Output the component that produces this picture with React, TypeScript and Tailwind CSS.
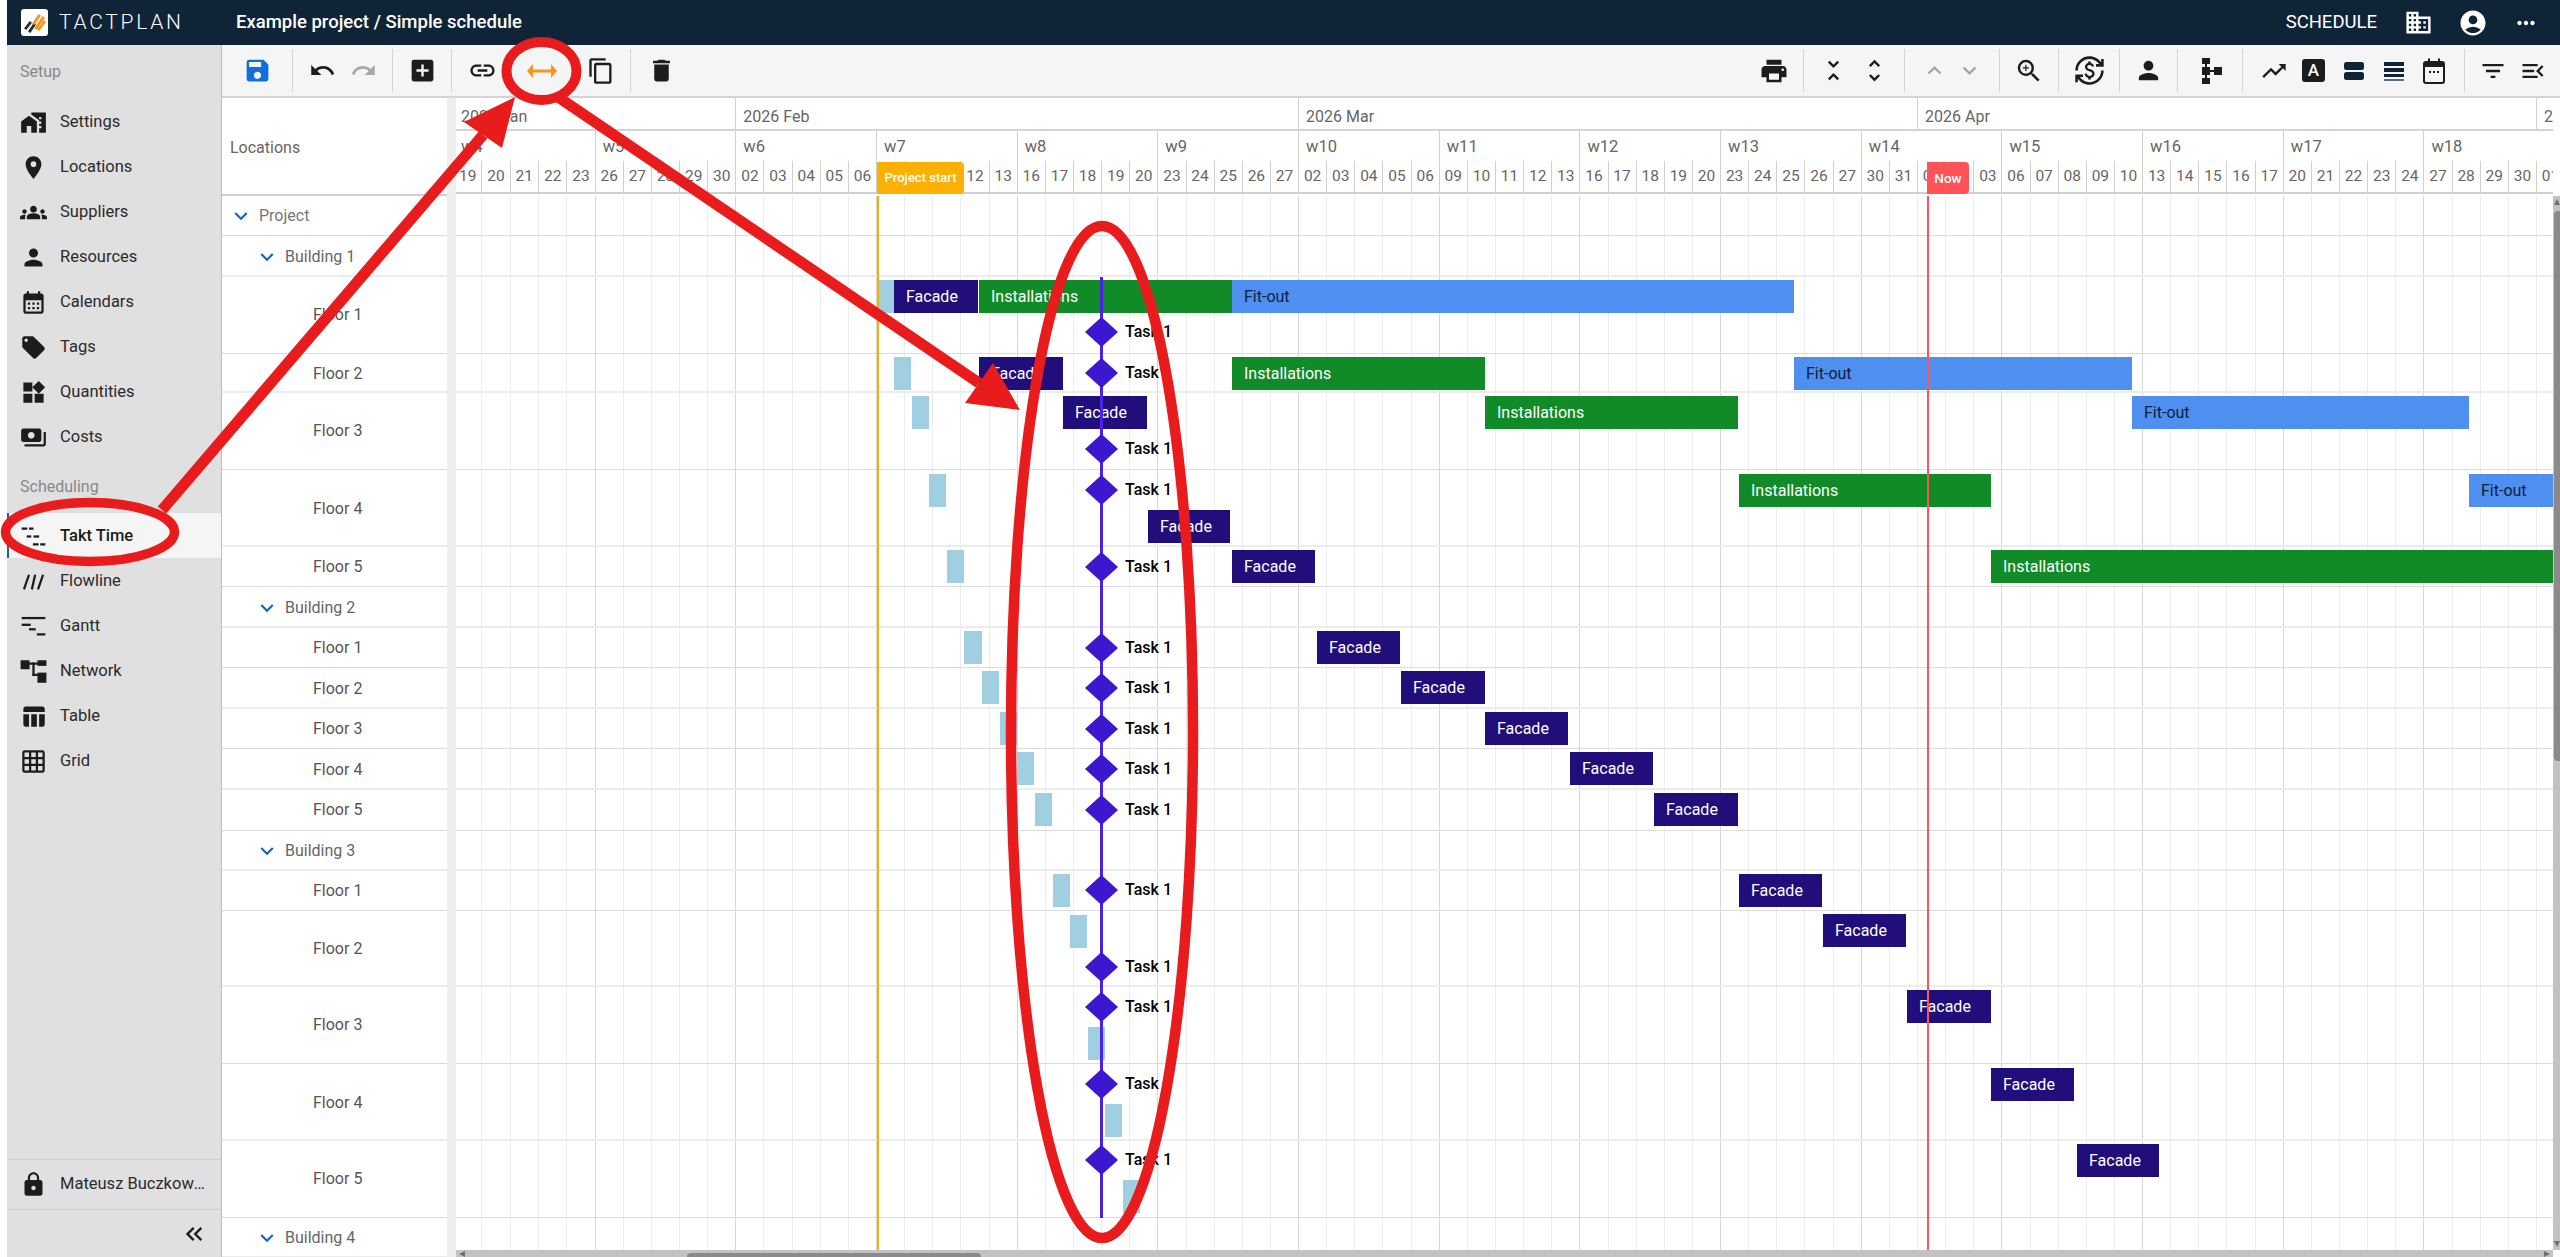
import type { ReactNode } from 'react'
import {
  MdAccountCircle,
  MdAddBox,
  MdCalendarMonth,
  MdContentCopy,
  MdCurrencyExchange,
  MdDelete,
  MdDomain,
  MdFilterList,
  MdGridOn,
  MdGroups,
  MdKeyboardArrowDown,
  MdKeyboardArrowUp,
  MdKeyboardDoubleArrowLeft,
  MdLink,
  MdLocalOffer,
  MdLocationOn,
  MdLock,
  MdMapsHomeWork,
  MdMenuOpen,
  MdMoreHoriz,
  MdPayments,
  MdPerson,
  MdPrint,
  MdRedo,
  MdSave,
  MdTableChart,
  MdTrendingUp,
  MdUndo,
  MdUnfoldLess,
  MdUnfoldMore,
  MdWidgets,
  MdZoomIn,
} from 'react-icons/md'

const CHART_LEFT = 456
const DAY = 28.136

type Kind = 'lag' | 'facade' | 'install' | 'fitout'
type Bar = { kind: Kind; from: number; to: number; top: number }
type Row = { label: string; level: 0 | 1 | 2; height: number; bars?: Bar[]; task?: number }

const barStyles: Record<Kind, string> = {
  lag: 'bg-[#9fcfe1]',
  facade: 'bg-[#210e7b] text-white',
  install: 'bg-[#108b27] text-white',
  fitout: 'bg-[#4e8ff0] text-[#10203a]',
}
const barLabels: Record<Kind, string> = { lag: '', facade: 'Facade', install: 'Installations', fitout: 'Fit-out' }

const rows: Row[] = [
  { label: 'Project', level: 0, height: 40 },
  { label: 'Building 1', level: 1, height: 41 },
  {
    label: 'Floor 1', level: 2, height: 77, task: 55,
    bars: [
      { kind: 'lag', from: 877, to: 893, top: 3 },
      { kind: 'facade', from: 894, to: 977, top: 3 },
      { kind: 'install', from: 979, to: 1231, top: 3 },
      { kind: 'fitout', from: 1232, to: 1793, top: 3 },
    ],
  },
  {
    label: 'Floor 2', level: 2, height: 39, task: 19,
    bars: [
      { kind: 'lag', from: 894, to: 910, top: 3 },
      { kind: 'facade', from: 979, to: 1062, top: 3 },
      { kind: 'install', from: 1232, to: 1484, top: 3 },
      { kind: 'fitout', from: 1794, to: 2131, top: 3 },
    ],
  },
  {
    label: 'Floor 3', level: 2, height: 77, task: 56,
    bars: [
      { kind: 'lag', from: 912, to: 928, top: 3 },
      { kind: 'facade', from: 1063, to: 1146, top: 3 },
      { kind: 'install', from: 1485, to: 1737, top: 3 },
      { kind: 'fitout', from: 2132, to: 2468, top: 3 },
    ],
  },
  {
    label: 'Floor 4', level: 2, height: 77, task: 20,
    bars: [
      { kind: 'lag', from: 929, to: 945, top: 4 },
      { kind: 'facade', from: 1148, to: 1229, top: 40 },
      { kind: 'install', from: 1739, to: 1990, top: 4 },
      { kind: 'fitout', from: 2469, to: 2553, top: 4 },
    ],
  },
  {
    label: 'Floor 5', level: 2, height: 40, task: 20,
    bars: [
      { kind: 'lag', from: 947, to: 963, top: 3 },
      { kind: 'facade', from: 1232, to: 1314, top: 3 },
      { kind: 'install', from: 1991, to: 2553, top: 3 },
    ],
  },
  { label: 'Building 2', level: 1, height: 41 },
  { label: 'Floor 1', level: 2, height: 40, task: 20, bars: [{ kind: 'lag', from: 964, to: 981, top: 3 }, { kind: 'facade', from: 1317, to: 1399, top: 3 }] },
  { label: 'Floor 2', level: 2, height: 41, task: 20, bars: [{ kind: 'lag', from: 982, to: 998, top: 3 }, { kind: 'facade', from: 1401, to: 1484, top: 3 }] },
  { label: 'Floor 3', level: 2, height: 40, task: 20, bars: [{ kind: 'lag', from: 1000, to: 1016, top: 3 }, { kind: 'facade', from: 1485, to: 1567, top: 3 }] },
  { label: 'Floor 4', level: 2, height: 41, task: 20, bars: [{ kind: 'lag', from: 1017, to: 1033, top: 3 }, { kind: 'facade', from: 1570, to: 1652, top: 3 }] },
  { label: 'Floor 5', level: 2, height: 41, task: 20, bars: [{ kind: 'lag', from: 1035, to: 1051, top: 3 }, { kind: 'facade', from: 1654, to: 1737, top: 3 }] },
  { label: 'Building 3', level: 1, height: 40 },
  { label: 'Floor 1', level: 2, height: 40, task: 19, bars: [{ kind: 'lag', from: 1053, to: 1069, top: 3 }, { kind: 'facade', from: 1739, to: 1821, top: 3 }] },
  { label: 'Floor 2', level: 2, height: 76, task: 56, bars: [{ kind: 'lag', from: 1070, to: 1086, top: 4 }, { kind: 'facade', from: 1823, to: 1905, top: 3 }] },
  { label: 'Floor 3', level: 2, height: 77, task: 20, bars: [{ kind: 'lag', from: 1088, to: 1104, top: 40 }, { kind: 'facade', from: 1907, to: 1990, top: 3 }] },
  { label: 'Floor 4', level: 2, height: 77, task: 20, bars: [{ kind: 'lag', from: 1105, to: 1121, top: 40 }, { kind: 'facade', from: 1991, to: 2073, top: 4 }] },
  { label: 'Floor 5', level: 2, height: 77, task: 19, bars: [{ kind: 'lag', from: 1123, to: 1139, top: 39 }, { kind: 'facade', from: 2077, to: 2158, top: 3 }] },
  { label: 'Building 4', level: 1, height: 40 },
]

const months = [
  { label: '2026 Jan', days: 10 },
  { label: '2026 Feb', days: 20 },
  { label: '2026 Mar', days: 22 },
  { label: '2026 Apr', days: 22 },
  { label: '2026 May', days: 5 },
]

// days hidden under the Project start and Now tags stay blank
const weeks = [
  { label: 'w4', days: ['19', '20', '21', '22', '23'] },
  { label: 'w5', days: ['26', '27', '28', '29', '30'] },
  { label: 'w6', days: ['02', '03', '04', '05', '06'] },
  { label: 'w7', days: ['', '', '', '12', '13'] },
  { label: 'w8', days: ['16', '17', '18', '19', '20'] },
  { label: 'w9', days: ['23', '24', '25', '26', '27'] },
  { label: 'w10', days: ['02', '03', '04', '05', '06'] },
  { label: 'w11', days: ['09', '10', '11', '12', '13'] },
  { label: 'w12', days: ['16', '17', '18', '19', '20'] },
  { label: 'w13', days: ['23', '24', '25', '26', '27'] },
  { label: 'w14', days: ['30', '31', '01', '', '03'] },
  { label: 'w15', days: ['06', '07', '08', '09', '10'] },
  { label: 'w16', days: ['13', '14', '15', '16', '17'] },
  { label: 'w17', days: ['20', '21', '22', '23', '24'] },
  { label: 'w18', days: ['27', '28', '29', '30', '01'] },
]

function TaktIcon() {
  return (
    <svg viewBox="0 0 24 24" width="27" height="27" fill="#1c1c1c">
      <rect x="1.5" y="4" width="5" height="2" /><rect x="8" y="4" width="4" height="2" />
      <rect x="6" y="11" width="4" height="2" /><rect x="12" y="11" width="5" height="2" />
      <rect x="11.5" y="18" width="5" height="2" /><rect x="18" y="18" width="4.5" height="2" />
    </svg>
  )
}

function FlowlineIcon() {
  return (
    <svg viewBox="0 0 24 24" width="27" height="27" stroke="#1c1c1c" strokeWidth="2" fill="none">
      <path d="M3.5 19 8 6M10.5 19 13.5 6M16 19 20.5 6" />
    </svg>
  )
}

function GanttIcon() {
  return (
    <svg viewBox="0 0 24 24" width="27" height="27" fill="#1c1c1c">
      <rect x="1.5" y="3.5" width="21" height="2" /><rect x="1.5" y="9.5" width="8" height="2" />
      <rect x="8" y="13.5" width="6" height="2" /><rect x="15" y="18" width="7.5" height="2" />
    </svg>
  )
}

function NetworkIcon() {
  return (
    <svg viewBox="0 0 24 24" width="27" height="27" fill="#1c1c1c">
      <rect x="0.5" y="2" width="8" height="8" /><rect x="15.5" y="2" width="8" height="5" />
      <rect x="15.5" y="13" width="8" height="9" /><rect x="8" y="4" width="8" height="2" />
      <rect x="11" y="4" width="2" height="12" /><rect x="11" y="14" width="5" height="2" />
    </svg>
  )
}

function TreeIcon() {
  return (
    <svg viewBox="0 0 24 28" width="24" height="28" fill="#1c1c1c">
      <rect x="4" y="1" width="8" height="6" /><rect x="4" y="21" width="8" height="6" />
      <rect x="4" y="10" width="8" height="8" /><rect x="16" y="10" width="8" height="8" />
      <rect x="7" y="5" width="2" height="18" /><rect x="10" y="13" width="8" height="2" />
    </svg>
  )
}

function RowsIcon() {
  return (
    <svg viewBox="0 0 24 24" width="24" height="24" fill="#0f2437">
      <rect x="2" y="3" width="20" height="8" rx="2.5" /><rect x="2" y="13" width="20" height="8" rx="2.5" />
    </svg>
  )
}

function LinesIcon() {
  return (
    <svg viewBox="0 0 24 24" width="24" height="24">
      <rect x="2" y="3" width="20" height="4" fill="#0f2437" /><rect x="2" y="9" width="20" height="4" fill="#0f2437" />
      <rect x="2" y="15" width="20" height="3" fill="#0f2437" /><rect x="2" y="20" width="20" height="2" fill="#5d6d7a" />
    </svg>
  )
}

function CalendarIcon() {
  return (
    <svg viewBox="0 0 24 26" width="24" height="26">
      <rect x="2" y="4" width="20" height="21" rx="2" fill="none" stroke="#1c1c1c" strokeWidth="2" />
      <rect x="2" y="4" width="20" height="5" fill="#1c1c1c" />
      <rect x="6" y="0.5" width="2" height="4" fill="#1c1c1c" /><rect x="16" y="0.5" width="2" height="4" fill="#1c1c1c" />
      <rect x="7" y="13" width="2" height="2" fill="#1c1c1c" /><rect x="11" y="13" width="2" height="2" fill="#1c1c1c" />
      <rect x="15" y="13" width="2" height="2" fill="#1c1c1c" />
    </svg>
  )
}

function Logo() {
  return (
    <div className="flex h-[27px] w-[27px] items-center justify-center rounded-[3px] bg-white">
      <svg viewBox="0 0 24 24" width="24" height="24" fill="none" strokeWidth="2.8" strokeLinecap="square">
        <path d="M3 17 7 12" stroke="#1d2b3a" />
        <path d="M7 20 11 14" stroke="#1d2b3a" />
        <path d="M11 12 16 5" stroke="#f7931e" />
        <path d="M13 17 20 7" stroke="#f7931e" />
        <path d="M16 18 21 11" stroke="#f7931e" />
      </svg>
    </div>
  )
}

function SideItem({ icon, label, active }: { icon: ReactNode; label: string; active?: boolean }) {
  return (
    <div className={active ? 'flex h-[45px] items-center border-l-2 border-[#1565c0] bg-[#f5f5f5] pl-[11px] pt-[2px] font-medium text-[#1a1a1a]' : 'flex h-[45px] items-center pl-[13px] pt-[2px] text-[#2a2a2a]'}>
      <span className="flex w-[27px] shrink-0 items-center justify-center text-[27px] text-[#1c1c1c]">{icon}</span>
      <span className="ml-[13px] text-[16.5px]">{label}</span>
    </div>
  )
}

function Sep() {
  return <span className="h-[43px] w-px shrink-0 bg-[#d4d4d4]" />
}

function ToolBtn({ className, children }: { className: string; children: ReactNode }) {
  return <span className={`flex items-center justify-center ${className}`}>{children}</span>
}

function Toolbar() {
  return (
    <div className="flex h-[53px] items-center justify-between border-b-2 border-[#d4d4d4] bg-[#f5f5f5] text-[27px] text-[#1c1c1c]">
      <div className="flex items-center">
        <ToolBtn className="w-[70px] text-[#0f6fde]"><MdSave className="text-[29px]" /></ToolBtn>
        <Sep />
        <div className="flex w-[99px] items-center justify-center">
          <ToolBtn className="w-[41px]"><MdUndo /></ToolBtn>
          <ToolBtn className="w-[41px] text-[#a8a8a8]"><MdRedo /></ToolBtn>
        </div>
        <Sep />
        <ToolBtn className="w-[58px]"><MdAddBox className="text-[29px]" /></ToolBtn>
        <Sep />
        <div className="flex w-[178px] items-center">
          <ToolBtn className="w-[60px]"><MdLink className="text-[29px]" /></ToolBtn>
          <ToolBtn className="w-[60px]">
            <svg viewBox="0 0 30 14" width="30" height="14" fill="#f7931e">
              <path d="M6 5.5h18V0l6 7-6 7V8.5H6V14L0 7l6-7Z" />
            </svg>
          </ToolBtn>
          <ToolBtn className="w-[58px]"><MdContentCopy className="text-[28px]" /></ToolBtn>
        </div>
        <Sep />
        <ToolBtn className="w-[60px]"><MdDelete className="text-[29px]" /></ToolBtn>
      </div>
      <div className="flex items-center">
        <ToolBtn className="w-[58px]"><MdPrint className="text-[30px]" /></ToolBtn>
        <Sep />
        <div className="flex w-[100px] items-center justify-center">
          <ToolBtn className="w-[41px]"><MdUnfoldLess className="text-[29px]" /></ToolBtn>
          <ToolBtn className="w-[41px]"><MdUnfoldMore className="text-[29px]" /></ToolBtn>
        </div>
        <Sep />
        <div className="flex w-[94px] items-center justify-center text-[#a3a3a3]">
          <ToolBtn className="w-[35px]"><MdKeyboardArrowUp /></ToolBtn>
          <ToolBtn className="w-[35px]"><MdKeyboardArrowDown /></ToolBtn>
        </div>
        <Sep />
        <ToolBtn className="w-[58px]"><MdZoomIn className="text-[30px]" /></ToolBtn>
        <Sep />
        <ToolBtn className="w-[60px]"><MdCurrencyExchange className="text-[31px]" /></ToolBtn>
        <Sep />
        <ToolBtn className="w-[57px]"><MdPerson className="text-[29px]" /></ToolBtn>
        <Sep />
        <ToolBtn className="w-[64px]"><TreeIcon /></ToolBtn>
        <Sep />
        <div className="flex w-[221px] items-center justify-center">
          <ToolBtn className="w-[40px]"><MdTrendingUp className="text-[28px]" /></ToolBtn>
          <ToolBtn className="w-[40px]">
            <span className="flex h-[23px] w-[23px] items-center justify-center rounded-[3px] bg-[#1c1c1c] text-[17px] font-medium text-white">A</span>
          </ToolBtn>
          <ToolBtn className="w-[40px]"><RowsIcon /></ToolBtn>
          <ToolBtn className="w-[40px]"><LinesIcon /></ToolBtn>
          <ToolBtn className="w-[40px]"><CalendarIcon /></ToolBtn>
        </div>
        <Sep />
        <div className="flex w-[95px] items-center justify-center">
          <ToolBtn className="w-[40px]"><MdFilterList className="text-[28px]" /></ToolBtn>
          <ToolBtn className="w-[40px]"><MdMenuOpen className="text-[28px]" /></ToolBtn>
        </div>
      </div>
    </div>
  )
}

function TimelineHeader() {
  return (
    <div className="-ml-[2px] w-[2150px] text-[#666]">
      <div className="flex h-[33px] border-b-2 border-[#d4d4d4]">
        {months.map((m, i) => (
          <div key={m.label} className={i === 0 ? 'h-full shrink-0 pl-[7px] pt-[7px] text-[16px]' : 'h-full shrink-0 border-l border-[#d0d0d0] pl-[7px] pt-[7px] text-[16px]'} style={{ width: m.days * DAY }}>
            {m.label}
          </div>
        ))}
      </div>
      <div className="flex h-[63px] border-b-2 border-[#d0d0d0]">
        {weeks.map((w, i) => (
          <div key={w.label} className={i === 0 ? 'flex w-[140.68px] shrink-0 flex-col' : 'flex w-[140.68px] shrink-0 flex-col border-l border-[#d0d0d0]'}>
            <div className="h-[31px] pl-[7px] pt-[5px] text-[16.5px] leading-[22px]">{w.label}</div>
            <div className="flex h-[32px]">
              {w.days.map((d, j) => (
                <div key={j} className={j === 0 ? 'flex-1 pt-[2px] text-center text-[15.5px] leading-[26px]' : 'flex-1 border-l border-[#d0d0d0] pt-[2px] text-center text-[15.5px] leading-[26px]'}>{d}</div>
              ))}
            </div>
          </div>
        ))}
      </div>
    </div>
  )
}

function GridLines() {
  return (
    <div className="absolute inset-y-0 -left-[2px] flex">
      {weeks.map((w, i) => (
        <div key={w.label} className={i === 0 ? 'flex w-[140.68px] shrink-0' : 'flex w-[140.68px] shrink-0 border-l border-[#d6d6d6]'}>
          {w.days.map((d, j) => <div key={j} className={j === 0 ? 'flex-1' : 'flex-1 border-l border-[#ececec]'} />)}
        </div>
      ))}
    </div>
  )
}

function rowLine(i: number) {
  return i % 2 === 0 ? 'border-b border-[#dcdcdc]' : 'border-b-2 border-[#ececec]'
}

function LocationCell({ row, index }: { row: Row; index: number }) {
  const pad = row.level === 0 ? 'pl-[6px] text-[#777]' : row.level === 1 ? 'pl-[32px] text-[#666]' : 'pl-[91px] text-[#555]'
  return (
    <div className={`flex items-center text-[16px] ${rowLine(index)} ${pad} ${index % 2 === 1 ? 'pt-[2px]' : ''}`} style={{ height: row.height }}>
      {row.level < 2 && <MdKeyboardArrowDown className="mr-[5px] text-[26px] text-[#1565c0]" />}
      {row.label}
    </div>
  )
}

function TimelineRow({ row, index }: { row: Row; index: number }) {
  return (
    <div className={`relative ${rowLine(index)}`} style={{ height: row.height }}>
      {row.bars?.map((b) => (
        <div
          key={b.kind}
          className={`absolute flex h-[33px] items-center overflow-hidden whitespace-nowrap pl-[12px] text-[16px] ${barStyles[b.kind]}`}
          style={{ left: b.from - CHART_LEFT, width: b.to - b.from + 1, top: b.top }}
        >
          {barLabels[b.kind]}
        </div>
      ))}
      {row.task !== undefined && (
        <div className="absolute left-[629px] z-10 flex -translate-y-1/2 items-center" style={{ top: row.task }}>
          <svg viewBox="0 0 33 30" width="33" height="30"><path d="M16.5 0 33 15 16.5 30 0 15Z" fill="#3d17d0" /></svg>
          <span className="ml-[7px] text-[16px] font-medium text-black">Task 1</span>
        </div>
      )}
    </div>
  )
}

function Annotations() {
  return (
    <svg className="pointer-events-none absolute inset-0 z-30" width="2560" height="1257" fill="none" stroke="#e81c1c">
      <ellipse cx="541.5" cy="71" rx="35" ry="29" strokeWidth="10" />
      <ellipse cx="90" cy="532" rx="84.5" ry="29.5" strokeWidth="9.5" />
      <ellipse cx="1102" cy="732" rx="91" ry="506" strokeWidth="10.5" />
      <path d="M162 510 483 135" strokeWidth="11" />
      <path d="M558 97 979 383" strokeWidth="11" />
      <path d="M515 97 464 122 502 148Z" fill="#e81c1c" stroke="none" />
      <path d="M1020 410 993 363 965 403Z" fill="#e81c1c" stroke="none" />
    </svg>
  )
}

export default function App() {
  return (
    <div className="relative h-[1257px] w-[2560px] overflow-hidden bg-white pl-[7px] font-['Roboto',sans-serif]">
      <header className="flex h-[45px] items-center justify-between bg-[#0f2437] pl-[14px] text-white">
        <div className="flex items-center">
          <Logo />
          <span className="ml-[11px] w-[177px] text-[21px] font-light tracking-[0.13em]">TACTPLAN</span>
          <span className="text-[18.5px] font-medium">Example project / Simple schedule</span>
        </div>
        <div className="flex items-center text-[29px]">
          <span className="text-[18.5px]">SCHEDULE</span>
          <MdDomain className="ml-[27px]" />
          <MdAccountCircle className="ml-[25px] text-[30px]" />
          <MdMoreHoriz className="ml-[25px] mr-[21px] text-[26px]" />
        </div>
      </header>

      <div className="flex h-[1212px]">
        <aside className="flex w-[215px] shrink-0 flex-col border-r border-[#bdbdbd] bg-[#e0e0e0]">
          <div className="flex h-[54px] items-center pl-[13px] text-[16px] text-[#888]">Setup</div>
          <SideItem icon={<MdMapsHomeWork />} label="Settings" />
          <SideItem icon={<MdLocationOn />} label="Locations" />
          <SideItem icon={<MdGroups />} label="Suppliers" />
          <SideItem icon={<MdPerson />} label="Resources" />
          <SideItem icon={<MdCalendarMonth />} label="Calendars" />
          <SideItem icon={<MdLocalOffer />} label="Tags" />
          <SideItem icon={<MdWidgets />} label="Quantities" />
          <SideItem icon={<MdPayments />} label="Costs" />
          <div className="flex h-[54px] items-center pl-[13px] pt-[2px] text-[16px] text-[#888]">Scheduling</div>
          <SideItem icon={<TaktIcon />} label="Takt Time" active />
          <SideItem icon={<FlowlineIcon />} label="Flowline" />
          <SideItem icon={<GanttIcon />} label="Gantt" />
          <SideItem icon={<NetworkIcon />} label="Network" />
          <SideItem icon={<MdTableChart />} label="Table" />
          <SideItem icon={<MdGridOn />} label="Grid" />
          <div className="mt-auto flex h-[50px] items-center border-t border-[#cfcfcf] pl-[13px] text-[#2a2a2a]">
            <MdLock className="w-[27px] shrink-0 text-[27px] text-[#1c1c1c]" />
            <span className="ml-[13px] w-[148px] truncate text-[16.5px]">Mateusz Buczkowski</span>
          </div>
          <div className="flex h-[48px] items-center justify-end border-t border-[#cfcfcf] pr-[13px] text-[28px] text-[#1c1c1c]">
            <MdKeyboardDoubleArrowLeft />
          </div>
        </aside>

        <main className="flex min-w-0 flex-1 flex-col">
          <Toolbar />
          <div className="flex">
            <div className="w-[225px] shrink-0">
              <div className="flex h-[98px] items-center border-b-2 border-[#d0d0d0] pl-[8px] pt-[3px] text-[16px] text-[#666]">Locations</div>
              <div className="h-[1061px] overflow-hidden">
                {rows.map((r, i) => <LocationCell key={i} row={r} index={i} />)}
              </div>
            </div>
            <div className="w-[9px] shrink-0 bg-[#eeeeee]" />
            <div className="min-w-0 flex-1">
              <div className="h-[98px] w-[2097px] overflow-hidden"><TimelineHeader /></div>
              <div className="flex h-[1054px]">
                <div className="relative h-full w-[2097px] shrink-0 overflow-hidden">
                  <GridLines />
                  <div className="relative">
                    {rows.map((r, i) => <TimelineRow key={i} row={r} index={i} />)}
                  </div>
                  <div className="absolute bottom-0 left-[421px] top-0 z-10 w-[2px] bg-[#f5b000]" />
                  <div className="absolute bottom-0 left-[1471px] top-0 z-10 w-[2px] bg-[#ff5358]" />
                  <div className="absolute left-[644px] top-[81px] z-[5] h-[941px] w-[3px] bg-[#4a22e8]" />
                </div>
                <div className="relative w-[7px] shrink-0 bg-[#c2c2c2]">
                  <svg className="absolute left-[1px] top-[3px]" viewBox="0 0 6 6" width="6" height="6"><path d="M3 0 6 6H0Z" fill="#6f6f6f" /></svg>
                  <div className="absolute bottom-auto left-[1px] right-0 top-[15px] h-[550px] rounded-l-sm bg-[#8a8a8a]" />
                  <svg className="absolute bottom-[3px] left-[1px]" viewBox="0 0 6 6" width="6" height="6"><path d="M0 0H6L3 6Z" fill="#6f6f6f" /></svg>
                </div>
              </div>
              <div className="relative h-[7px] w-[2097px] bg-[#c2c2c2]">
                <svg className="absolute left-[3px] top-[1px]" viewBox="0 0 6 6" width="6" height="6"><path d="M0 3 6 0V6Z" fill="#6f6f6f" /></svg>
                <div className="absolute bottom-0 left-[231px] top-[3px] w-[294px] rounded-t-sm bg-[#8a8a8a]" />
                <svg className="absolute right-[3px] top-[1px]" viewBox="0 0 6 6" width="6" height="6"><path d="M0 0 6 3 0 6Z" fill="#6f6f6f" /></svg>
              </div>
            </div>
          </div>
        </main>
      </div>

      <div className="absolute left-[877px] top-[162px] z-20 flex h-[32px] w-[87px] items-center justify-center rounded-r-[4px] bg-[#fdb004] text-[13px] font-medium text-white">Project start</div>
      <div className="absolute left-[1927px] top-[162px] z-20 flex h-[32px] w-[42px] items-center justify-center rounded-r-[4px] bg-[#ff5358] text-[13.5px] font-medium text-white">Now</div>
      <Annotations />
    </div>
  )
}
